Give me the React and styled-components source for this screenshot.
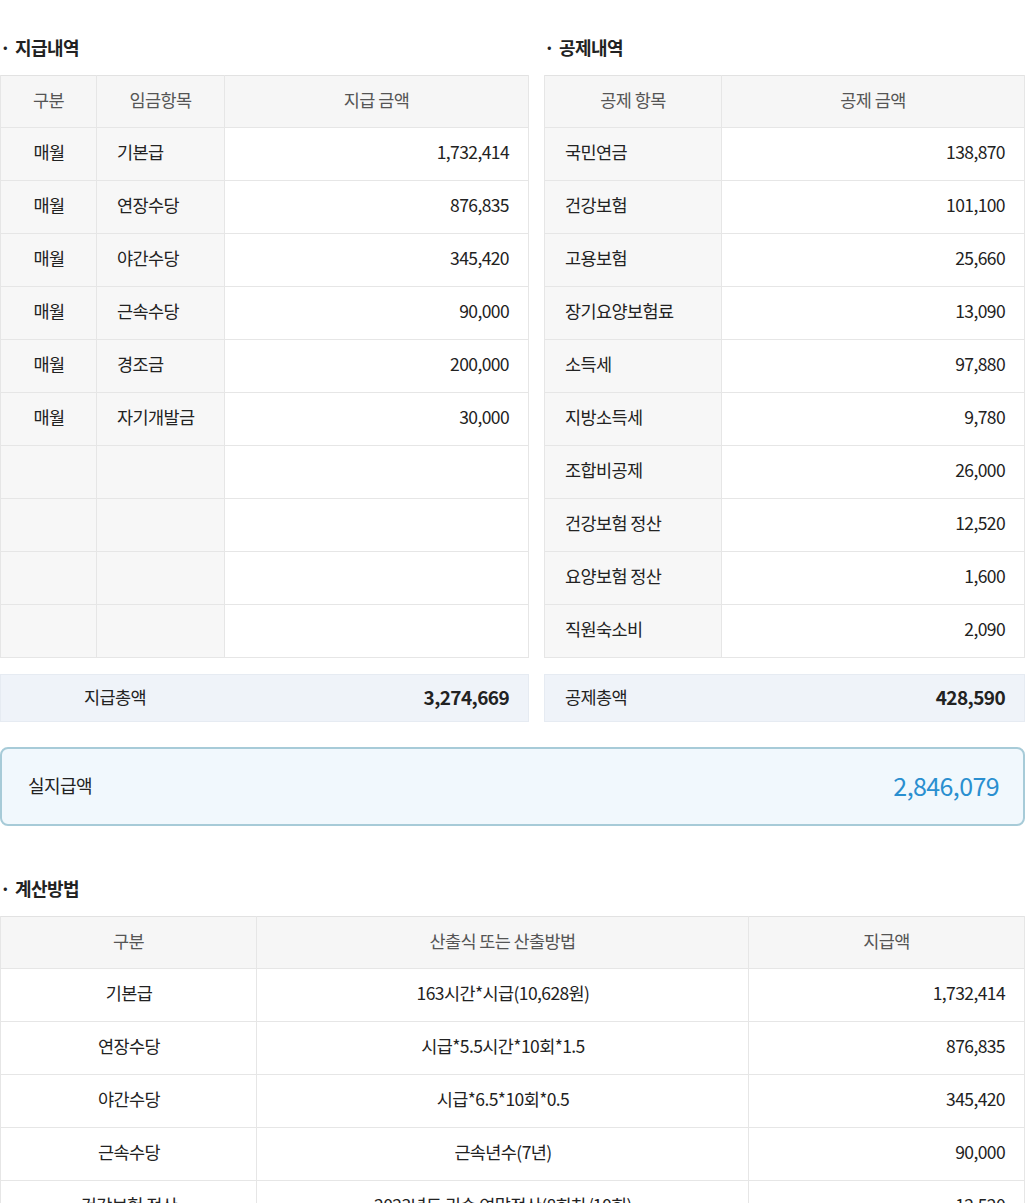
import React from "react";
import styled, { createGlobalStyle } from "styled-components";

const G = createGlobalStyle`
  body{margin:0;background:#fff;font-family:"Noto Sans CJK KR","Noto Sans",sans-serif;color:#222;letter-spacing:-0.6px;}
`;
const Page = styled.div`width:1025px;padding-top:31px;`;
const Cols = styled.div`display:grid;grid-template-columns:529px 481px;column-gap:15px;`;
const Title = styled.h3`margin:0 0 12px;font-size:18px;font-weight:700;height:32px;line-height:32px;&::before{content:"·";margin-right:5px;}`;
const Table = styled.table`width:100%;border-collapse:collapse;font-size:17.5px;table-layout:fixed;
  border-top:1px solid #e2e2e2;`;
const Th = styled.th`height:47px;background:#f6f6f6;color:#555;font-weight:400;border:1px solid #e6e6e6;border-top:none;text-align:center;padding:0 0 4px;`;
const Td = styled.td`height:47px;border:1px solid #e6e6e6;padding:0 19px 5px 20px;
  background:${p=>p.$grey?"#f7f7f7":"#fff"};text-align:${p=>p.$align||"left"};color:#222;`;
const Total = styled.div`margin-top:16px;height:48px;background:#eff3f9;border:1px solid #e6ebf2;display:flex;align-items:center;
  justify-content:space-between;padding:0 19px 4px;font-size:17.5px;box-sizing:border-box;padding-left:${p=>p.$pl}px;`;
const TotalVal = styled.b`font-weight:700;font-size:19px;`;
const Net = styled.div`margin:25px 0 0;height:79px;border:2px solid #a7cbd8;border-radius:8px;background:#f1f8fd;display:flex;align-items:center;
  justify-content:space-between;padding:0 24px 3px 26px;font-size:18px;box-sizing:border-box;`;
const NetVal = styled.span`color:#2a8fd0;font-size:25px;`;
const Calc = styled.div`margin-top:46px;`;

const pay=[["매월","기본급","1,732,414"],["매월","연장수당","876,835"],["매월","야간수당","345,420"],["매월","근속수당","90,000"],["매월","경조금","200,000"],["매월","자기개발금","30,000"],["","",""],["","",""],["","",""],["","",""]];
const ded=[["국민연금","138,870"],["건강보험","101,100"],["고용보험","25,660"],["장기요양보험료","13,090"],["소득세","97,880"],["지방소득세","9,780"],["조합비공제","26,000"],["건강보험 정산","12,520"],["요양보험 정산","1,600"],["직원숙소비","2,090"]];
const calc=[["기본급","163시간*시급(10,628원)","1,732,414"],["연장수당","시급*5.5시간*10회*1.5","876,835"],["야간수당","시급*6.5*10회*0.5","345,420"],["근속수당","근속년수(7년)","90,000"],["건강보험 정산","2023년도 귀속 연말정산(8회차/10회)","12,520"],["요양보험 정산","2023년도 귀속 연말정산(8회차/10회)","1,600"]];

export default function App(){
  return <Page><G/>
    <Cols>
      <div>
        <Title>지급내역</Title>
        <Table><colgroup><col width="96"/><col width="128"/><col/></colgroup>
          <thead><tr><Th>구분</Th><Th>임금항목</Th><Th>지급 금액</Th></tr></thead>
          <tbody>{pay.map((r,i)=><tr key={i}><Td $grey $align="center">{r[0]}</Td><Td $grey>{r[1]}</Td><Td $align="right">{r[2]}</Td></tr>)}</tbody>
        </Table>
        <Total $pl={83}><span>지급총액</span><TotalVal>3,274,669</TotalVal></Total>
      </div>
      <div>
        <Title>공제내역</Title>
        <Table><colgroup><col width="177"/><col/></colgroup>
          <thead><tr><Th>공제 항목</Th><Th>공제 금액</Th></tr></thead>
          <tbody>{ded.map((r,i)=><tr key={i}><Td $grey>{r[0]}</Td><Td $align="right">{r[1]}</Td></tr>)}</tbody>
        </Table>
        <Total $pl={20}><span>공제총액</span><TotalVal>428,590</TotalVal></Total>
      </div>
    </Cols>
    <Net><span>실지급액</span><NetVal>2,846,079</NetVal></Net>
    <Calc>
      <Title>계산방법</Title>
      <Table><colgroup><col width="256"/><col width="492"/><col/></colgroup>
        <thead><tr><Th>구분</Th><Th>산출식 또는 산출방법</Th><Th>지급액</Th></tr></thead>
        <tbody>{calc.map((r,i)=><tr key={i}><Td $align="center">{r[0]}</Td><Td $align="center">{r[1]}</Td><Td $align="right">{r[2]}</Td></tr>)}</tbody>
      </Table>
    </Calc>
  </Page>;
}
